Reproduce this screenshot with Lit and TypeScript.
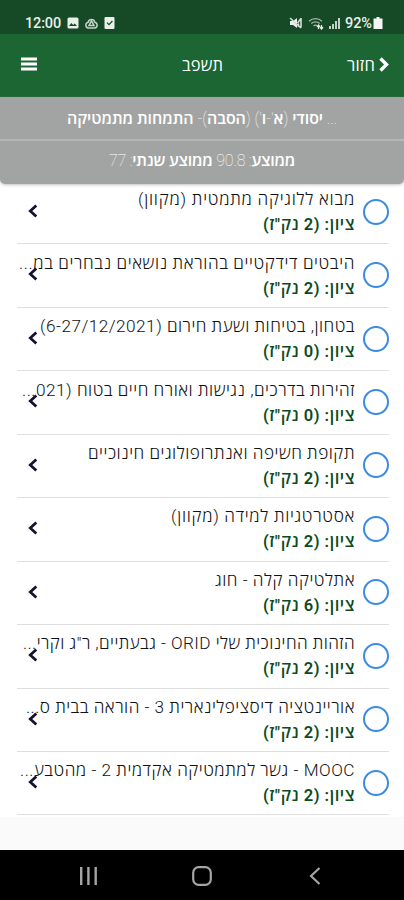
import { LitElement, html, css } from "lit";
import { customElement, property } from "lit/decorators.js";

interface Course {
  name: string;
  points: number;
  width: number;
}

const courses: Course[] = [
  { name: "מבוא ללוגיקה מתמטית (מקוון)", points: 2, width: 217 },
  { name: "היבטים דידקטיים בהוראת נושאים נבחרים במ...", points: 2, width: 336 },
  { name: "בטחון, בטיחות ושעת חירום (6-27/12/2021)", points: 0, width: 315 },
  { name: "זהירות בדרכים, נגישות ואורח חיים בטוח (021...", points: 0, width: 333 },
  { name: "תקופת חשיפה ואנתרופולוגים חינוכיים", points: 2, width: 267 },
  { name: "אסטרטגיות למידה (מקוון)", points: 2, width: 184 },
  { name: "אתלטיקה קלה - חוג", points: 6, width: 140 },
  { name: "הזהות החינוכית שלי ORID - גבעתיים, ר\"ג וקרי...", points: 2, width: 332 },
  { name: "אוריינטציה דיסציפלינארית 3 - הוראה בבית ס...", points: 2, width: 329 },
  { name: "MOOC - גשר למתמטיקה אקדמית 2 - מהטבע...", points: 2, width: 335 },
];

/** One line of text whose tracking is adjusted so that it fills a given width. */
@customElement("fit-line")
export class FitLine extends LitElement {
  @property({ type: Number }) width = 0;

  static styles = css`
    :host { display: block; white-space: nowrap; }
    .text { display: inline-block; }
  `;

  firstUpdated() {
    const box = this.renderRoot.querySelector(".text") as HTMLElement;
    const count = [...(this.textContent ?? "").trim()].length;
    const natural = box.getBoundingClientRect().width;
    if (this.width && count) box.style.letterSpacing = `${(this.width - natural) / count}px`;
  }

  render() {
    return html`<span class="text"><slot></slot></span>`;
  }
}

@customElement("app-root")
export class AppRoot extends LitElement {
  static styles = css`
    :host {
      display: flex;
      flex-direction: column;
      width: 404px;
      height: 900px;
      overflow: hidden;
      background: #fafafa;
      font-family: Roboto, "Open Sans", "Noto Sans", "DejaVu Sans", sans-serif;
    }
    svg { display: block; flex: none; }
    .status {
      display: flex;
      align-items: center;
      flex: none;
      height: 34px;
      padding: 12px 21px 0 25px;
      box-sizing: border-box;
      background: #164926;
      color: #e9efe9;
      font-size: 14.5px;
      font-weight: 500;
      direction: ltr;
    }
    .clock { width: 36px; margin-right: 6px; }
    .notices { display: flex; gap: 6px; flex: 1; align-items: center; }
    .signals { display: flex; align-items: center; gap: 5px; }
    .cell { margin-left: -4px; }
    .bar {
      display: grid;
      grid-template-columns: 1fr auto 1fr;
      align-items: center;
      flex: none;
      height: 63px;
      padding: 0 15px 3px 21px;
      box-sizing: border-box;
      background: #1b6632;
      color: #fff;
      font-size: 16.5px;
      font-weight: 500;
      direction: rtl;
    }
    .title { margin-right: 5px; }
    .back { display: flex; align-items: center; gap: 4px; }
    .menu { justify-self: end; }
    .summary {
      flex: none;
      height: 87px;
      background: #a2a4a3;
      border-radius: 0 0 5px 5px;
      box-shadow: 0 1px 3px #9999;
      color: #fff;
      direction: rtl;
      font-size: 16px;
      font-weight: 600;
      z-index: 1;
    }
    .band {
      display: flex;
      justify-content: center;
      align-items: center;
      height: 42px;
      padding-bottom: 1px;
      box-sizing: border-box;
    }
    .band + .band { height: 45px; border-top: 2px solid #b5b7b6; padding-bottom: 5px; }
    .thin { font-weight: 100; }
    .list { flex: none; height: 636px; background: #fff; margin-top: -3px; direction: rtl; }
    .row {
      display: flex;
      align-items: center;
      height: 63.45px;
      margin: 0 15px 0 17px;
      box-sizing: border-box;
      border-bottom: 1.5px solid #dfdfdf;
      position: relative;
    }
    .ring {
      flex: none;
      width: 26px;
      height: 26px;
      box-sizing: border-box;
      border: 2px solid #3b8be0;
      border-radius: 50%;
      margin-bottom: 1px;
    }
    .info { padding-right: 8px; }
    .name { height: 25px; line-height: 25px; font-size: 17.2px; font-weight: 300; color: #111; }
    .grade { height: 25px; line-height: 25px; font-size: 16.5px; font-weight: 600; color: #0c4b1c; }
    .go { position: absolute; left: 11px; top: 23px; }
    .nav {
      display: flex;
      justify-content: space-between;
      align-items: center;
      flex: none;
      height: 50px;
      margin-top: auto;
      padding: 2px 83px 0 79px;
      box-sizing: border-box;
      background: #000;
      direction: ltr;
    }
    .home { margin-right: 4px; }
  `;

  render() {
    return html`
      <div class="status">
        <fit-line class="clock" width="36">12:00</fit-line>
        <div class="notices">
          <svg width="12" height="12" viewBox="0 0 12 12">
            <rect x=".5" y=".5" width="11" height="11" rx="1.5" fill="#e9efe9" />
            <path d="M2 9l2.3-3 2 2 1.4-1.4L10 9z" fill="#164926" />
          </svg>
          <svg width="13" height="12" viewBox="0 0 13 12" fill="none" stroke="#c5d2c7" stroke-width="1.5">
            <path d="M3.2 5.2a3.4 3.4 0 0 1 6.6 0A3 3 0 0 1 10 11H3a3 3 0 0 1 .2-5.8z" />
            <path d="M6.5 3.8L4 8.500h5z" />
          </svg>
          <svg width="11" height="12" viewBox="0 0 11 12">
            <rect x=".5" width="10" height="12" rx="1" fill="#e9efe9" />
            <path d="M3 5.600l2 2 3.400-3.600" fill="none" stroke="#164926" stroke-width="1.2" />
          </svg>
        </div>
        <div class="signals">
          <svg width="14" height="12" viewBox="0 0 14 12">
            <path d="M1 4h3l4-3v10L4 8H1z" fill="#e9efe9" />
            <path d="M1 1l11 10M8.500 6l3.500-4.500M9.500 6.500V10M12 1v9.500" stroke="#d5dfd7" stroke-width="1.6" fill="none" />
          </svg>
          <svg width="16" height="13" viewBox="0 0 16 13" fill="none" stroke="#a5b8a9" stroke-width="1.3">
            <path d="M1 4.200a9.500 9.500 0 0 1 13 0M3.300 6.600a6.200 6.200 0 0 1 8.400 0M5.500 9a3 3 0 0 1 3.500-.4" />
            <path d="M10.500 12V8M9 9.800l1.500-1.800 1.500 1.800M13.500 8v4M12 10.300l1.500 1.700 1.500-1.700" stroke="#e9efe9" />
          </svg>
          <svg width="11" height="12" viewBox="0 0 11 12" fill="#c5d2c7">
            <path d="M0 9h2v3H0zM3 7h2v5H3zM6 4h2v8H6zM9 1h2v11H9z" />
          </svg>
          <fit-line width="27">92%</fit-line>
          <svg class="cell" width="10" height="12" viewBox="0 0 10 12" fill="#f3f6f3">
            <path d="M3.500 0h3v1.500h3V12h-9V1.500h3z" />
          </svg>
        </div>
      </div>

      <div class="bar">
        <div class="back">
          <svg width="10" height="15" viewBox="0 0 10 15" fill="none" stroke="#fff" stroke-width="3.400">
            <path d="M1.500 1.500l6 6-6 6" />
          </svg>
          <fit-line width="28">חזור</fit-line>
        </div>
        <fit-line class="title" width="41">תשפב</fit-line>
        <svg class="menu" width="16" height="14" viewBox="0 0 16 14" fill="#fff">
          <path d="M0 .5h16v3H0zM0 5.500h16v3H0zM0 10.500h16v3H0z" />
        </svg>
      </div>

      <div class="summary">
        <div class="band">
          <fit-line width="270"><span class="thin">... </span>יסודי <span class="thin">(</span>א<span class="thin">'-</span>ו<span class="thin">') (</span>הסבה<span class="thin">)-</span> התמחות מתמטיקה</fit-line>
        </div>
        <div class="band">
          <fit-line width="186">ממוצע<span class="thin">: 90.8</span> ממוצע שנתי<span class="thin">: 77</span></fit-line>
        </div>
      </div>

      <div class="list">
        ${courses.map(
          (c) => html`
            <div class="row">
              <div class="ring"></div>
              <div class="info">
                <fit-line class="name" .width=${c.width}>${c.name}</fit-line>
                <fit-line class="grade" .width=${92}>ציון: (${c.points} נק"ז)</fit-line>
              </div>
              <svg class="go" width="10" height="14" viewBox="0 0 10 14" fill="none" stroke="#15122f" stroke-width="2.800">
                <path d="M8.300 1.500L2.300 7l6 5.500" />
              </svg>
            </div>
          `,
        )}
      </div>

      <div class="nav">
        <svg width="19" height="18" viewBox="0 0 19 18" fill="#a5a5a5">
          <path d="M1 0h2.400v18H1zM8.200 0h2.400v18H8.200zM15.500 0h2.400v18h-2.400z" />
        </svg>
        <svg class="home" width="20" height="20" viewBox="0 0 20 20" fill="none" stroke="#a5a5a5" stroke-width="2.200">
          <rect x="1.200" y="1.200" width="17.600" height="17.600" rx="5.500" />
        </svg>
        <svg width="12" height="18" viewBox="0 0 12 18" fill="none" stroke="#a5a5a5" stroke-width="2.200">
          <path d="M10.500 1L2 9l8.500 8" />
        </svg>
      </div>
    `;
  }
}
